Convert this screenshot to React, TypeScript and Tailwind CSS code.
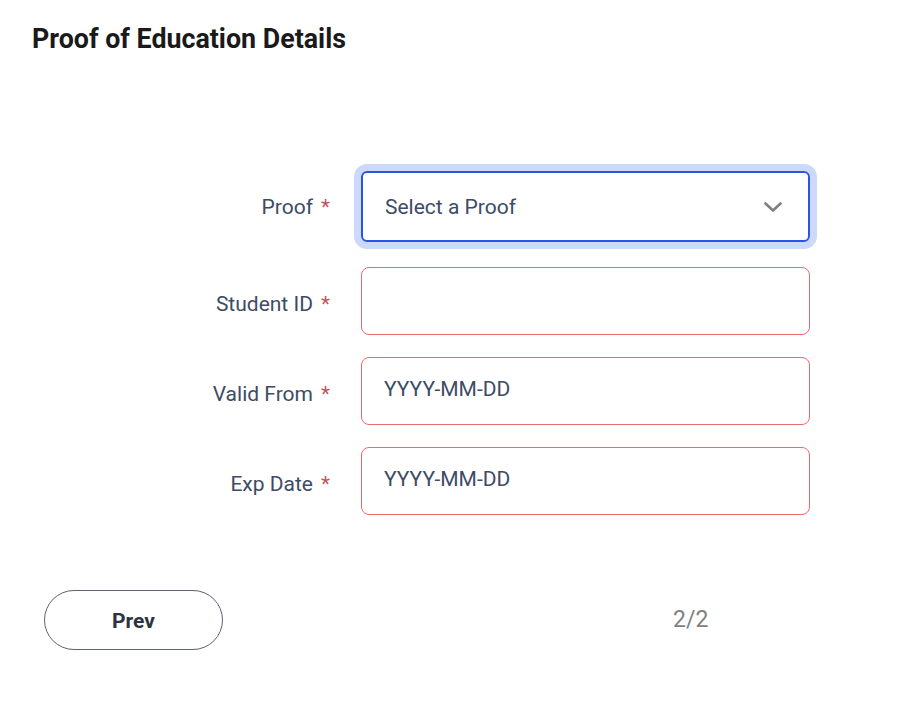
const rows = [
  { label: 'Student ID', value: '', mt: 'mt-[25px]' },
  { label: 'Valid From', value: 'YYYY-MM-DD', mt: 'mt-[22px]' },
  { label: 'Exp Date', value: 'YYYY-MM-DD', mt: 'mt-[22px]' },
]

export default function App() {
  return (
    <div className="w-[900px] h-[714px] bg-white font-['Roboto',sans-serif] relative">
      <h1 className="pl-[32px] pt-[21px] text-[26.8px] leading-[36px] font-bold text-[#1a1a1a]">
        Proof of Education Details
      </h1>

      <div className="mt-[114px]">
        {/* Proof select */}
        <div className="flex items-center">
          <div className="w-[330px] flex justify-end items-center text-[21px] text-[#3d4b66] pt-[2px]">
            <span>Proof</span>
            <span className="ml-[8px] text-[#c0565b]">*</span>
          </div>
          <div className="ml-[31px] w-[449px] h-[71px] rounded-[6px] border-2 border-[#2a55e0] ring-[7px] ring-[#cdd9fb] flex items-center justify-between pl-[22px] pr-[26px]">
            <span className="text-[21px] text-[#3d4b66] pt-[2px]">Select a Proof</span>
            <svg width="18" height="10" viewBox="0 0 18 10" fill="none">
              <path d="M1.5 1.5 9 8.5 16.5 1.5" stroke="#808080" strokeWidth="2.6" strokeLinecap="round" strokeLinejoin="round" />
            </svg>
          </div>
        </div>

        {rows.map((r) => (
          <div key={r.label} className={`flex items-center ${r.mt}`}>
            <div className="w-[330px] flex justify-end items-center text-[21px] text-[#3d4b66] pt-[8px]">
              <span>{r.label}</span>
              <span className="ml-[8px] text-[#c0565b]">*</span>
            </div>
            <div className="ml-[31px] w-[449px] h-[68px] rounded-[8px] border-[1.5px] border-[#ee6a71] flex items-center pl-[22px] pb-[2px]">
              <span className="text-[21px] text-[#3d4b66]">{r.value}</span>
            </div>
          </div>
        ))}
      </div>

      <div className="flex items-center mt-[75px]">
        <button className="ml-[44px] w-[179px] h-[60px] rounded-full border-[1.5px] border-[#5b6170] text-[21px] font-bold text-[#2d3340] pt-[3px]">
          Prev
        </button>
        <span className="ml-[450px] text-[23px] text-[#808080]">2/2</span>
      </div>
    </div>
  )
}
